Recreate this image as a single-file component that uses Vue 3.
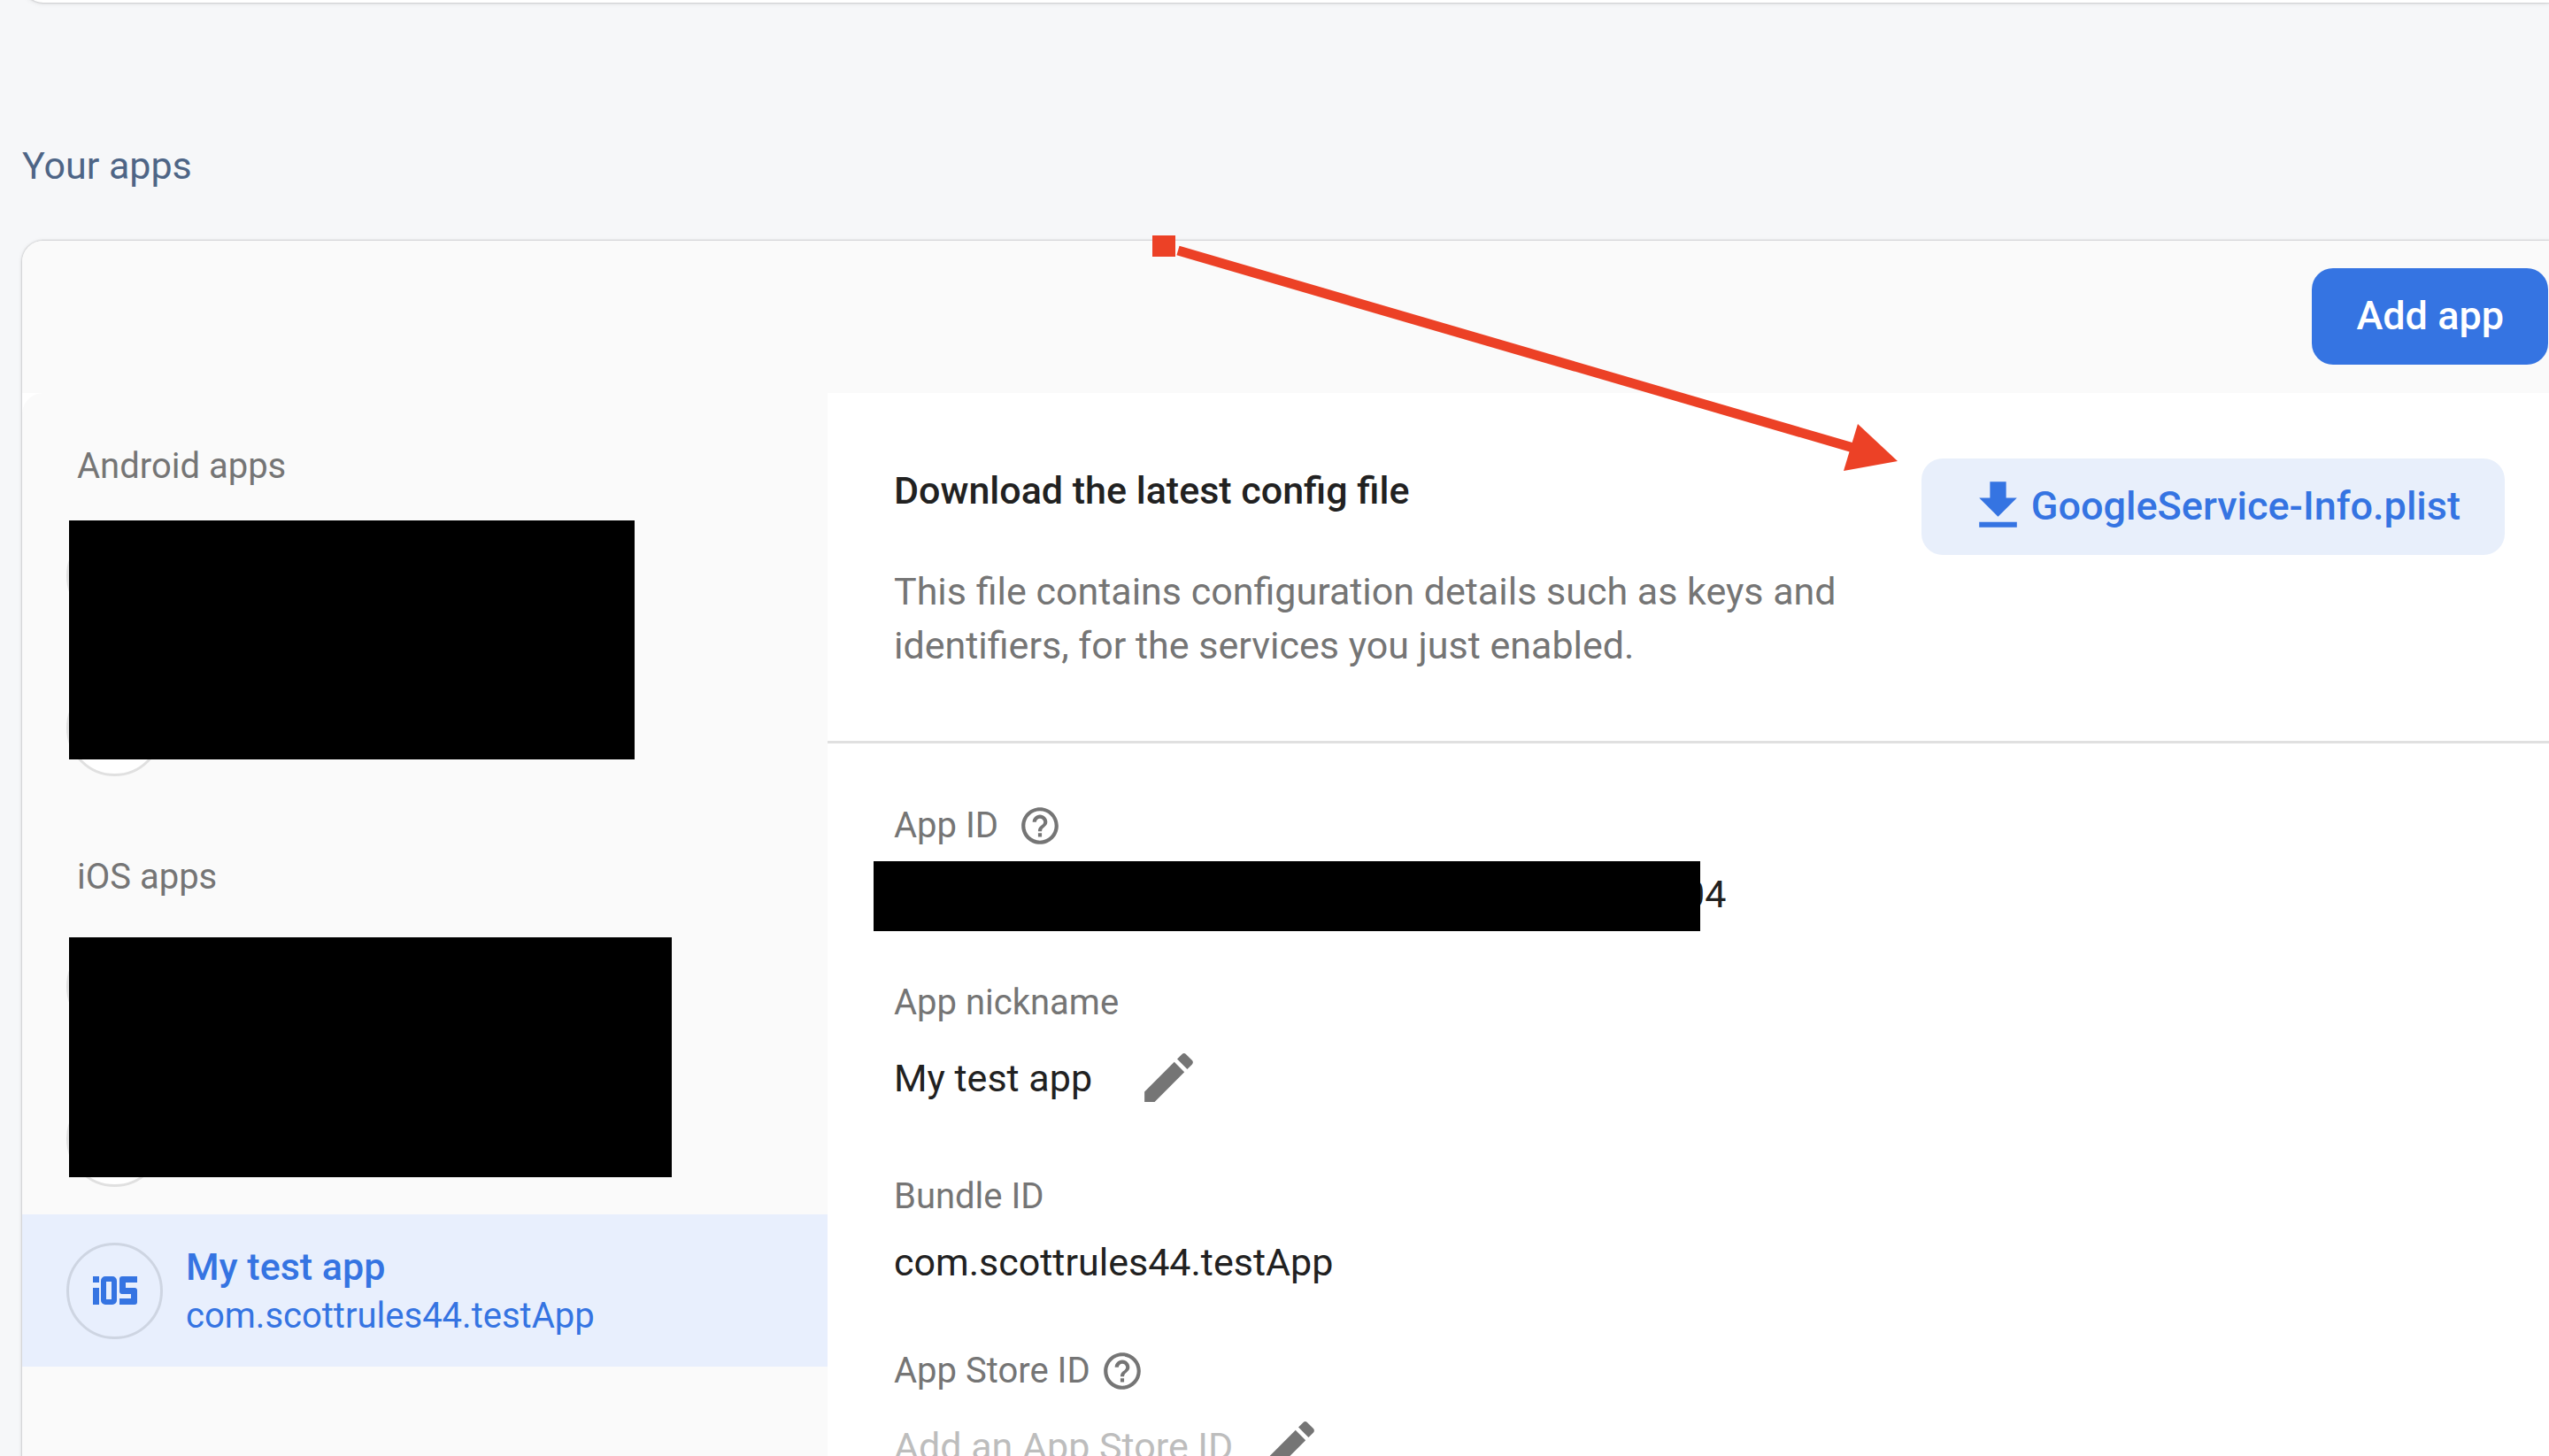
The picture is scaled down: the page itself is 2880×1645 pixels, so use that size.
<script setup>
const groups = [
  {
    title: 'Android apps',
    hidden: 2,
    cover: 'cover-android',
    apps: [],
  },
  {
    title: 'iOS apps',
    hidden: 2,
    cover: 'cover-ios',
    apps: [{ name: 'My test app', id: 'com.scottrules44.testApp' }],
  },
]

const icons = {
  help: 'M11 18h2v-2h-2v2zm1-16C6.48 2 2 6.48 2 12s4.48 10 10 10 10-4.48 10-10S17.52 2 12 2zm0 18c-4.41 0-8-3.59-8-8s3.59-8 8-8 8 3.59 8 8-3.59 8-8 8zm0-14c-2.21 0-4 1.79-4 4h2c0-1.1.9-2 2-2s2 .9 2 2c0 2-3 1.75-3 5h2c0-2.25 3-2.5 3-5 0-2.21-1.79-4-4-4z',
  edit: 'M3 17.25V21h3.75L17.81 9.94l-3.75-3.75L3 17.25zM20.71 7.04c.39-.39.39-1.02 0-1.41l-2.34-2.34c-.39-.39-1.02-.39-1.41 0l-1.83 1.83 3.75 3.75 1.83-1.83z',
  download: 'M19 9h-4V3H9v6H5l7 7 7-7zM5 18v2h14v-2H5z',
}
</script>

<template>
  <div class="page">
    <section class="previous-card"></section>

    <h2 class="heading">Your apps</h2>

    <section class="card">
      <header class="toolbar">
        <button type="button" class="btn btn-primary">Add app</button>
      </header>

      <div class="body">
        <nav class="sidebar">
          <section v-for="group in groups" :key="group.title" class="group">
            <h3 class="group-title">{{ group.title }}</h3>
            <div class="group-list">
              <div v-for="n in group.hidden" :key="n" class="app-row">
                <span class="badge"></span>
              </div>
              <div class="cover" :class="group.cover"></div>
            </div>
            <a v-for="app in group.apps" :key="app.id" href="#" class="app-row selected">
              <span class="badge">
                <svg class="ios-mark" viewBox="0 0 50 32" role="img" aria-label="iOS">
                  <rect x="0" y="0" width="7" height="7" />
                  <rect x="0" y="13" width="7" height="19" />
                  <rect x="12" y="3" width="12" height="26" rx="2" class="ring" />
                  <rect x="34" y="0" width="16" height="7" />
                  <rect x="30" y="0" width="7" height="20" rx="3" />
                  <rect x="31" y="13" width="18" height="7" rx="3" />
                  <rect x="43" y="13" width="7" height="19" rx="3" />
                  <rect x="30" y="25" width="16" height="7" />
                </svg>
              </span>
              <span class="app-text">
                <span class="app-name">{{ app.name }}</span>
                <span class="app-id">{{ app.id }}</span>
              </span>
            </a>
          </section>
        </nav>

        <main class="details">
          <div class="config">
            <div class="config-text">
              <h3 class="config-title">Download the latest config file</h3>
              <p class="config-copy">
                This file contains configuration details such as keys and identifiers, for the
                services you just enabled.
              </p>
            </div>
            <button type="button" class="btn btn-tonal">
              <svg class="icon" viewBox="0 0 24 24" aria-hidden="true"><path :d="icons.download" /></svg>
              <span>GoogleService-Info.plist</span>
            </button>
          </div>

          <dl class="fields">
            <div class="field">
              <dt class="label wide">
                App ID
                <button type="button" class="icon-btn small" aria-label="About App ID">
                  <svg viewBox="0 0 24 24"><path :d="icons.help" /></svg>
                </button>
              </dt>
              <dd class="value masked">04<span class="cover cover-id"></span></dd>
            </div>
            <div class="field editable">
              <dt class="label">App nickname</dt>
              <dd class="value wide">
                My test app
                <button type="button" class="icon-btn" aria-label="Edit nickname">
                  <svg viewBox="0 0 24 24"><path :d="icons.edit" /></svg>
                </button>
              </dd>
            </div>
            <div class="field compact">
              <dt class="label">Bundle ID</dt>
              <dd class="value">com.scottrules44.testApp</dd>
            </div>
            <div class="field editable">
              <dt class="label">
                App Store ID
                <button type="button" class="icon-btn small" aria-label="About App Store ID">
                  <svg viewBox="0 0 24 24"><path :d="icons.help" /></svg>
                </button>
              </dt>
              <dd class="value empty">
                Add an App Store ID
                <button type="button" class="icon-btn" aria-label="Edit App Store ID">
                  <svg viewBox="0 0 24 24"><path :d="icons.edit" /></svg>
                </button>
              </dd>
            </div>
          </dl>
        </main>
      </div>
    </section>

    <!-- Annotation arrow pointing at the download button -->
    <svg class="arrow" viewBox="0 0 850 270" aria-hidden="true">
      <rect x="2" y="2" width="26" height="24" />
      <line x1="31" y1="19" x2="794" y2="242" />
      <polygon points="799,215 844,257 783,268" />
    </svg>
  </div>
</template>

<style>
body {
  margin: 0;
  background: #f6f7f9;
}
</style>

<style scoped>
.page {
  position: relative;
  box-sizing: border-box;
  height: 100vh;
  overflow: hidden;
  padding-left: 25px;
  background: #f6f7f9;
  color: #212121;
  font-family: Roboto, "Liberation Sans", sans-serif;
  font-size: 43px;
  line-height: 60px;
}

h2,
h3,
p,
dl,
dd {
  margin: 0;
  font-size: inherit;
  font-weight: 400;
}

button {
  border: 0;
  padding: 0;
  background: none;
  font: inherit;
  color: inherit;
  cursor: pointer;
}

svg {
  display: block;
  fill: currentColor;
}

.previous-card,
.card {
  background: #fff;
  box-shadow: 0 0 2px 1px rgba(0, 0, 0, 0.14), 0 1px 6px rgba(0, 0, 0, 0.08);
}

.previous-card {
  height: 40px;
  margin-top: -37px;
  border-bottom-left-radius: 24px;
}

.heading {
  margin-top: 154px;
  margin-bottom: 55px;
  color: #4e6586;
}

.card {
  border-top-left-radius: 24px;
}

.toolbar {
  display: flex;
  justify-content: flex-end;
  padding: 31px 1px 32px 0;
  border-top-left-radius: 24px;
  background: #fafafa;
}

.btn {
  display: flex;
  align-items: center;
  height: 109px;
  padding: 0 50px 2px;
  border-radius: 24px;
  font-size: 45px;
  font-weight: 500;
  white-space: nowrap;
}

.btn-primary {
  background: #3574e2;
  color: #fff;
}

.btn-tonal {
  flex: none;
  gap: 1px;
  background: #e8effb;
  color: #3574e2;
}

.icon {
  width: 73px;
  height: 73px;
}

.body {
  display: flex;
}

.sidebar {
  flex: none;
  width: 910px;
  min-height: 1300px;
  border-top-left-radius: 24px;
  background: #fafafa;
}

.group-title {
  padding: 59px 62px 13px;
  color: #757575;
  font-size: 40px;
  line-height: 48px;
}

.group-list {
  position: relative;
}

.app-row {
  display: flex;
  align-items: center;
  gap: 26px;
  height: 172px;
  padding-left: 50px;
  text-decoration: none;
}

.selected {
  background: #e8effd;
  color: #3574e2;
}

.badge {
  display: flex;
  flex: none;
  align-items: center;
  justify-content: center;
  box-sizing: border-box;
  width: 109px;
  height: 109px;
  border: 3px solid #e0e0e0;
  border-radius: 50%;
  background: #fff;
}

.selected .badge {
  border-color: #ced5e2;
  background: none;
}

.ios-mark {
  width: 50px;
  height: 32px;
}

.ring {
  fill: none;
  stroke: currentColor;
  stroke-width: 6px;
}

.app-text {
  display: flex;
  flex-direction: column;
}

.app-name {
  font-weight: 500;
  line-height: 58px;
}

.app-id {
  font-size: 40px;
  line-height: 54px;
}

.cover {
  position: absolute;
  background: #000;
}

.cover-android {
  top: 24px;
  left: 53px;
  width: 639px;
  height: 270px;
}

.cover-ios {
  top: 31px;
  left: 53px;
  width: 681px;
  height: 271px;
}

.details {
  flex: 1;
  min-width: 0;
}

.config {
  display: flex;
  align-items: flex-start;
  justify-content: space-between;
  padding: 74px 50px 77px 75px;
  border-bottom: 3px solid #e0e0e0;
}

.config-text {
  padding-top: 6px;
}

.config-title {
  margin-bottom: 54px;
  font-weight: 500;
}

.config-copy {
  color: #757575;
  line-height: 61px;
}

.fields {
  display: flex;
  flex-direction: column;
  gap: 68px;
  padding: 68px 75px;
}

.field {
  display: flex;
  flex-direction: column;
  gap: 22px;
}

.editable {
  gap: 23px;
  padding-bottom: 5px;
}

.compact {
  gap: 19px;
}

.label {
  display: flex;
  align-items: center;
  gap: 11px;
  height: 50px;
  color: #757575;
  font-size: 40px;
}

.label.wide {
  gap: 22px;
}

.value {
  display: flex;
  align-items: center;
  gap: 28px;
}

.value.wide {
  gap: 50px;
}

.value.empty {
  color: #bdbdbd;
}

.masked {
  position: relative;
  padding-left: 892px;
}

.cover-id {
  top: -7px;
  left: -23px;
  width: 934px;
  height: 79px;
}

.icon-btn {
  flex: none;
  width: 73px;
  height: 73px;
  color: #757575;
}

.icon-btn.small {
  width: 50px;
  height: 50px;
}

.arrow {
  position: absolute;
  top: 264px;
  left: 1300px;
  width: 850px;
  height: 270px;
  fill: #ec4126;
  stroke: none;
}

.arrow line {
  stroke: #ec4126;
  stroke-width: 11px;
}
</style>
